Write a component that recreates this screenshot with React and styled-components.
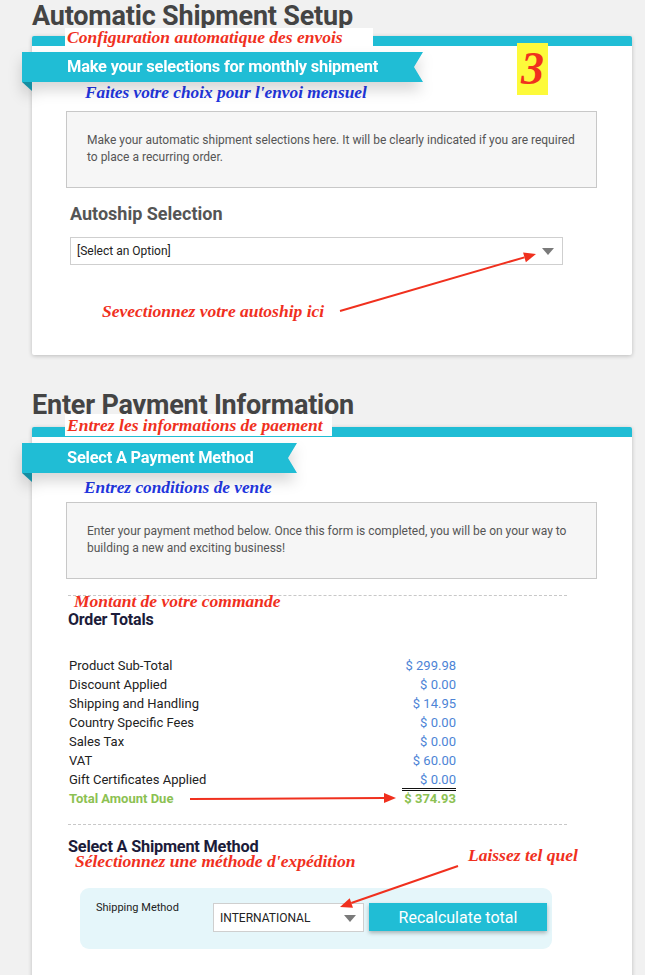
import React from 'react';
import styled, { createGlobalStyle } from 'styled-components';

const CYAN = '#20bdd5';
const RED = '#f0301e';
const BLUE = '#2236e0';

const GlobalStyle = createGlobalStyle`
  html, body {
    margin: 0;
    padding: 0;
    background: #f1f1f1;
    font-family: Roboto, 'Liberation Sans', Arial, sans-serif;
  }
`;

const Page = styled.div`
  width: 600px;
  margin-left: 32px;
  padding-bottom: 40px;
`;

const SectionTitle = styled.h1`
  margin: ${(p) => p.$top || 0}px 0 0;
  font-size: 27px;
  line-height: 32px;
  font-weight: 700;
  color: #444;
  letter-spacing: -0.2px;
`;

const Card = styled.div`
  position: relative;
  margin-top: ${(p) => p.$top}px;
  background: #fff;
  border-top: 10px solid ${CYAN};
  border-radius: 2px;
  box-shadow: 0 1px 4px rgba(0, 0, 0, 0.22);
  padding-bottom: ${(p) => p.$bottom}px;
`;

const Note = styled.div`
  position: absolute;
  left: ${(p) => p.$left}px;
  top: ${(p) => p.$top}px;
  font-family: 'Liberation Serif', 'Times New Roman', serif;
  font-weight: 700;
  font-style: italic;
  font-size: 17.5px;
  line-height: 18px;
  color: ${(p) => p.$color || RED};
  white-space: nowrap;
  z-index: 3;
`;

const NoteLabel = styled(Note)`
  background: #fff;
  width: ${(p) => p.$width}px;
  height: ${(p) => p.$height}px;
  line-height: ${(p) => p.$height}px;
  padding-left: 2px;
  box-sizing: border-box;
`;

const StepBadge = styled.div`
  position: absolute;
  left: 485px;
  top: -3px;
  width: 31px;
  height: 52px;
  background: #fdfa3a;
  display: flex;
  align-items: center;
  justify-content: center;
  font-family: 'Liberation Serif', 'Times New Roman', serif;
  font-weight: 700;
  font-style: italic;
  font-size: 46px;
  line-height: 46px;
  color: ${RED};
`;

const RibbonWrap = styled.div`
  position: relative;
  margin: 6px 0 0 -10px;
  width: ${(p) => p.$width}px;
  filter: drop-shadow(0 8px 7px rgba(0, 0, 0, 0.16));

  &::after {
    content: '';
    position: absolute;
    left: 0;
    bottom: -9px;
    border-style: solid;
    border-width: 0 10px 9px 0;
    border-color: transparent #158ea2 transparent transparent;
  }
`;

const Ribbon = styled.div`
  height: 30px;
  background: ${CYAN};
  color: #fff;
  font-size: 16.4px;
  font-weight: 700;
  line-height: 30px;
  padding-left: 45px;
  letter-spacing: -0.2px;
  clip-path: polygon(0 0, 100% 0, calc(100% - 9px) 50%, 100% 100%, 0 100%);
`;

const Caption = styled.div`
  margin: ${(p) => p.$top}px 0 0 ${(p) => p.$left}px;
  font-family: 'Liberation Serif', 'Times New Roman', serif;
  font-weight: 700;
  font-style: italic;
  font-size: 17.3px;
  line-height: 20px;
  color: ${BLUE};
`;

const InfoBox = styled.div`
  margin: ${(p) => p.$top}px 35px 0 34px;
  background: #f6f6f6;
  border: 1px solid #c8c8c8;
  padding: 20px 16px 21px 20px;
  font-size: 12px;
  line-height: 17px;
  color: #555;
`;

const FieldTitle = styled.h3`
  margin: 15px 0 0 38px;
  font-size: 18px;
  line-height: 22px;
  font-weight: 700;
  color: #555;
`;

const SelectBox = styled.div`
  position: relative;
  box-sizing: border-box;
  width: ${(p) => p.$width}px;
  height: ${(p) => p.$height}px;
  margin-left: ${(p) => p.$left || 0}px;
  margin-top: ${(p) => p.$top || 0}px;
  border: 1px solid #cfcfcf;
  background: #fff;
  padding-left: 6px;
  display: flex;
  align-items: center;
  font-size: ${(p) => p.$size}px;
  color: #222;
  flex-shrink: 0;

  &::after {
    content: '';
    position: absolute;
    right: ${(p) => p.$arrowRight}px;
    top: 50%;
    margin-top: -3px;
    border-style: solid;
    border-width: 7px 6.5px 0 6.5px;
    border-color: #7a7a7a transparent transparent transparent;
  }
`;

const Dashed = styled.div`
  margin: ${(p) => p.$top}px 0 0 36px;
  width: 499px;
  border-top: 1px dashed #c8c8c8;
`;

const SubTitle = styled.h3`
  margin: ${(p) => p.$top}px 0 0 36px;
  font-size: ${(p) => p.$size}px;
  line-height: 20px;
  font-weight: 700;
  color: #1c1c3a;
  letter-spacing: -0.2px;
`;

const Totals = styled.div`
  margin: 26px 0 0 37px;
  width: 387px;
`;

const TotalRow = styled.div`
  display: flex;
  justify-content: space-between;
  align-items: center;
  height: 19px;
  font-size: 13px;
  color: ${(p) => (p.$total ? '#8cc152' : '#222')};
  font-weight: ${(p) => (p.$total ? 700 : 400)};
`;

const Amount = styled.span`
  box-sizing: border-box;
  min-width: 54px;
  text-align: right;
  line-height: 16px;
  color: ${(p) => (p.$total ? '#8cc152' : '#4d84d6')};
  border-bottom: ${(p) => (p.$double ? '3px double #111' : '0')};
  margin-bottom: ${(p) => (p.$double ? '-3px' : '0')};
`;

const ShipBox = styled.div`
  margin: 31px 0 0 48px;
  width: 472px;
  height: 61px;
  box-sizing: border-box;
  background: #e5f6fa;
  border-radius: 9px;
  padding: 13px 0 0 16px;
  display: flex;
  align-items: flex-start;
`;

const ShipLabel = styled.div`
  width: 117px;
  font-size: 11px;
  line-height: 14px;
  color: #222;
`;

const RecalcButton = styled.button`
  margin: 2px 0 0 5px;
  width: 178px;
  height: 28px;
  border: 0;
  background: ${CYAN};
  color: #fff;
  font-family: Roboto, 'Liberation Sans', Arial, sans-serif;
  font-size: 16px;
  box-shadow: 0 2px 4px rgba(0, 0, 0, 0.28);
  cursor: pointer;
`;

const ArrowLayer = styled.svg`
  position: absolute;
  left: 0;
  top: 0;
  width: 100%;
  height: 100%;
  overflow: visible;
  pointer-events: none;
  z-index: 2;
`;

const Arrow = ({ x1, y1, x2, y2 }) => {
  const a = Math.atan2(y2 - y1, x2 - x1);
  const len = 12;
  const w = 5;
  const bx = x2 - len * Math.cos(a);
  const by = y2 - len * Math.sin(a);
  const px = -Math.sin(a) * w;
  const py = Math.cos(a) * w;
  return (
    <g>
      <line x1={x1} y1={y1} x2={bx} y2={by} stroke={RED} strokeWidth="2" />
      <polygon
        points={`${x2},${y2} ${bx + px},${by + py} ${bx - px},${by - py}`}
        fill={RED}
      />
    </g>
  );
};

const totals = [
  ['Product Sub-Total', '$ 299.98'],
  ['Discount Applied', '$ 0.00'],
  ['Shipping and Handling', '$ 14.95'],
  ['Country Specific Fees', '$ 0.00'],
  ['Sales Tax', '$ 0.00'],
  ['VAT', '$ 60.00'],
  ['Gift Certificates Applied', '$ 0.00'],
];

export default function App() {
  return (
    <Page>
      <GlobalStyle />
      <SectionTitle>Automatic Shipment Setup</SectionTitle>
      <Card $top={4} $bottom={90}>
        <NoteLabel $left={33} $top={-18} $width={308} $height={18}>
          Configuration automatique des envois
        </NoteLabel>
        <StepBadge>3</StepBadge>
        <RibbonWrap $width={401}>
          <Ribbon>Make your selections for monthly shipment</Ribbon>
        </RibbonWrap>
        <Caption $top={1} $left={53}>
          Faites votre choix pour l'envoi mensuel
        </Caption>
        <InfoBox $top={8}>
          Make your automatic shipment selections here. It will be clearly indicated if you are
          required to place a recurring order.
        </InfoBox>
        <FieldTitle>Autoship Selection</FieldTitle>
        <SelectBox $width={493} $height={28} $left={38} $top={12} $size={12} $arrowRight={8}>
          [Select an Option]
        </SelectBox>
        <Note $left={70} $top={256}>Sevectionnez votre autoship ici</Note>
        <ArrowLayer>
          <Arrow x1={308} y1={265} x2={504} y2={208} />
        </ArrowLayer>
      </Card>

      <SectionTitle $top={34}>Enter Payment Information</SectionTitle>
      <Card $top={6} $bottom={40}>
        <NoteLabel $left={33} $top={-23} $width={267} $height={22}>
          Entrez les informations de paement
        </NoteLabel>
        <RibbonWrap $width={275}>
          <Ribbon>Select A Payment Method</Ribbon>
        </RibbonWrap>
        <Caption $top={5} $left={52}>
          Entrez conditions de vente
        </Caption>
        <InfoBox $top={4}>
          Enter your payment method below. Once this form is completed, you will be on your way to
          building a new and exciting business!
        </InfoBox>
        <Dashed $top={16} />
        <Note $left={42} $top={155}>Montant de votre commande</Note>
        <SubTitle $top={14} $size={16}>Order Totals</SubTitle>
        <Totals>
          {totals.map(([label, value], i) => (
            <TotalRow key={label}>
              <span>{label}</span>
              <Amount $double={i === totals.length - 1}>{value}</Amount>
            </TotalRow>
          ))}
          <TotalRow $total>
            <span>Total Amount Due</span>
            <Amount $total>$ 374.93</Amount>
          </TotalRow>
        </Totals>
        <Dashed $top={16} />
        <SubTitle $top={12} $size={16.3}>Select A Shipment Method</SubTitle>
        <Note $left={43} $top={415}>Sélectionnez une méthode d'expédition</Note>
        <Note $left={436} $top={409}>Laissez tel quel</Note>
        <ShipBox>
          <ShipLabel>Shipping Method</ShipLabel>
          <SelectBox $width={151} $height={29} $top={2} $size={12} $arrowRight={7}>
            INTERNATIONAL
          </SelectBox>
          <RecalcButton type="button">Recalculate total</RecalcButton>
        </ShipBox>
        <ArrowLayer>
          <Arrow x1={158} y1={362} x2={364} y2={361} />
          <Arrow x1={426} y1={429} x2={308} y2={470} />
        </ArrowLayer>
      </Card>
    </Page>
  );
}
